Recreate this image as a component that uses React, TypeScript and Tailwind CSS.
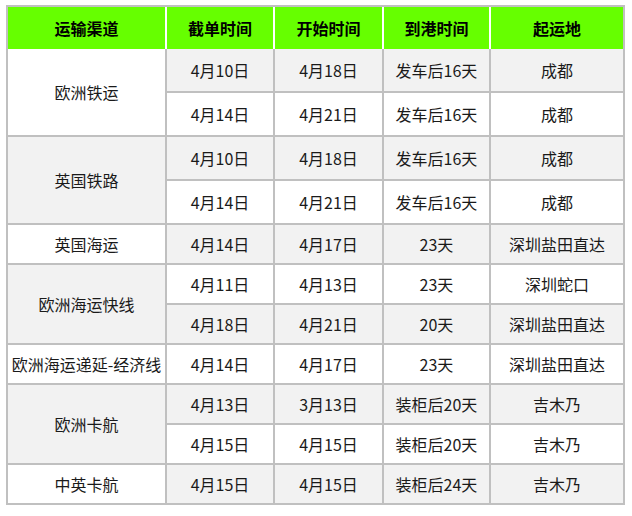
import React from "react";

type Row = {
  group?: { name: string; span: number; gray: boolean };
  cells: [string, string, string, string];
  gray: boolean;
  h: number;
};

const rows: Row[] = [
  { group: { name: "欧洲铁运", span: 2, gray: false }, cells: ["4月10日", "4月18日", "发车后16天", "成都"], gray: true, h: 44 },
  { cells: ["4月14日", "4月21日", "发车后16天", "成都"], gray: false, h: 44 },
  { group: { name: "英国铁路", span: 2, gray: true }, cells: ["4月10日", "4月18日", "发车后16天", "成都"], gray: true, h: 44 },
  { cells: ["4月14日", "4月21日", "发车后16天", "成都"], gray: false, h: 44 },
  { group: { name: "英国海运", span: 1, gray: false }, cells: ["4月14日", "4月17日", "23天", "深圳盐田直达"], gray: true, h: 40 },
  { group: { name: "欧洲海运快线", span: 2, gray: true }, cells: ["4月11日", "4月13日", "23天", "深圳蛇口"], gray: false, h: 40 },
  { cells: ["4月18日", "4月21日", "20天", "深圳盐田直达"], gray: true, h: 40 },
  { group: { name: "欧洲海运递延-经济线", span: 1, gray: false }, cells: ["4月14日", "4月17日", "23天", "深圳盐田直达"], gray: false, h: 40 },
  { group: { name: "欧洲卡航", span: 2, gray: true }, cells: ["4月13日", "3月13日", "装柜后20天", "吉木乃"], gray: true, h: 40 },
  { cells: ["4月15日", "4月15日", "装柜后20天", "吉木乃"], gray: false, h: 40 },
  { group: { name: "中英卡航", span: 1, gray: false }, cells: ["4月15日", "4月15日", "装柜后24天", "吉木乃"], gray: true, h: 38 },
];

const headers = ["运输渠道", "截单时间", "开始时间", "到港时间", "起运地"];
const widths = ["w-[159px]", "w-[108px]", "w-[109px]", "w-[107px]", "w-[132px]"];

export default function App() {
  const last = rows.length - 1;
  return (
    <div
      className="w-[632px] h-[516px] bg-white pt-[5px] pl-[6px]"
      style={{ fontFamily: '"Noto Sans CJK SC", "Noto Sans", sans-serif' }}
    >
      <table className="w-[619px] border-separate border-spacing-0 border-2 border-[#c0c0c0] table-fixed text-[16px] text-[#1a1a1a]">
        <colgroup>
          {widths.map((w, i) => (
            <col key={i} className={w} />
          ))}
        </colgroup>
        <thead>
          <tr className="h-[42px]">
            {headers.map((h, i) => (
              <th
                key={h}
                className={`bg-[#66ff00] font-bold text-black p-0 text-center align-middle ${
                  i < headers.length - 1 ? "border-r-2 border-white" : ""
                }`}
              >
                {h}
              </th>
            ))}
          </tr>
        </thead>
        <tbody>
          {rows.map((r, ri) => {
            const groupLast = r.group ? ri + r.group.span - 1 === last : false;
            return (
              <tr key={ri} style={{ height: r.h }}>
                {r.group && (
                  <td
                    rowSpan={r.group.span}
                    className={`p-0 text-center align-middle border-r-2 border-[#c0c0c0] whitespace-nowrap ${
                      groupLast ? "" : "border-b-2"
                    } ${r.group.gray ? "bg-[#f2f2f2]" : "bg-white"}`}
                  >
                    {r.group.name}
                  </td>
                )}
                {r.cells.map((c, ci) => (
                  <td
                    key={ci}
                    className={`p-0 text-center align-middle border-[#c0c0c0] whitespace-nowrap ${
                      ci < 3 ? "border-r-2" : ""
                    } ${ri < last ? "border-b-2" : ""} ${r.gray ? "bg-[#f2f2f2]" : "bg-white"}`}
                  >
                    {c}
                  </td>
                ))}
              </tr>
            );
          })}
        </tbody>
      </table>
    </div>
  );
}
